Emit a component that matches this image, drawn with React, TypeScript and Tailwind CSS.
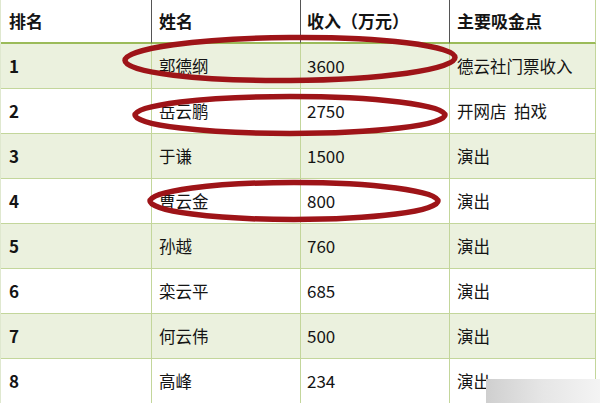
const rows = [
  { rank: '1', name: '郭德纲', income: '3600', source: '德云社门票收入' },
  { rank: '2', name: '岳云鹏', income: '2750', source: '开网店  拍戏' },
  { rank: '3', name: '于谦', income: '1500', source: '演出' },
  { rank: '4', name: '曹云金', income: '800', source: '演出' },
  { rank: '5', name: '孙越', income: '760', source: '演出' },
  { rank: '6', name: '栾云平', income: '685', source: '演出' },
  { rank: '7', name: '何云伟', income: '500', source: '演出' },
  { rank: '8', name: '高峰', income: '234', source: '演出' },
]

const font = { fontFamily: '"Noto Sans CJK SC", "Liberation Sans", sans-serif' }

export default function App() {
  return (
    <div className="relative w-[600px] h-[403px] overflow-hidden bg-white text-[#141414]" style={font}>
      <div className="grid grid-cols-[151px_149px_149px_146px] border-l border-[#dfe8cf]">
        {/* header */}
        <div className="h-[44px] flex items-center pl-[8px] text-[17px] font-bold border-r border-[#555] border-b-2 border-b-[#9bbb59]">排名</div>
        <div className="h-[44px] flex items-center pl-[7px] text-[17px] font-bold border-r border-[#555] border-b-2 border-b-[#9bbb59]">姓名</div>
        <div className="h-[44px] flex items-center pl-[6px] text-[17px] font-bold border-r border-[#555] border-b-2 border-b-[#9bbb59]">收入（万元）</div>
        <div className="h-[44px] flex items-center pl-[7px] text-[17px] font-bold border-r border-[#c3d69b] border-b-2 border-b-[#9bbb59]">主要吸金点</div>

        {rows.map((r, i) => {
          const bg = i % 2 === 0 ? 'bg-[#ebf1de]' : 'bg-white'
          return (
            <div key={r.rank} className="contents">
              <div className={`h-[45px] flex items-center pl-[8px] text-[17px] font-bold border-r border-b border-[#c3d69b] ${bg}`}>{r.rank}</div>
              <div className={`h-[45px] flex items-center pl-[7px] text-[16.5px] border-r border-b border-[#c3d69b] ${bg}`}>{r.name}</div>
              <div className={`h-[45px] flex items-center pl-[6px] text-[17px] border-r border-b border-[#c3d69b] ${bg}`}>{r.income}</div>
              <div className={`h-[45px] flex items-center pl-[7px] text-[16.5px] whitespace-pre border-r border-b border-[#c3d69b] ${bg}`}>{r.source}</div>
            </div>
          )
        })}
      </div>

      {/* hand-drawn circles */}
      <svg className="absolute inset-0 pointer-events-none" width="600" height="403" viewBox="0 0 600 403">
        <g fill="none" stroke="#9e1418" strokeWidth="5.5" strokeLinecap="round">
          <ellipse cx="290" cy="59" rx="165" ry="21.5" transform="rotate(-0.5 290 59)" />
          <ellipse cx="290" cy="115" rx="155" ry="18.5" />
          <ellipse cx="294" cy="201" rx="144" ry="18.5" />
        </g>
      </svg>

      {/* watermark box */}
      <div className="absolute left-[486px] top-[379px] w-[114px] h-[24px] bg-gradient-to-r from-[#cfcfcf] via-[#e6e6e6] to-[#f4f4f4]" />
    </div>
  )
}
